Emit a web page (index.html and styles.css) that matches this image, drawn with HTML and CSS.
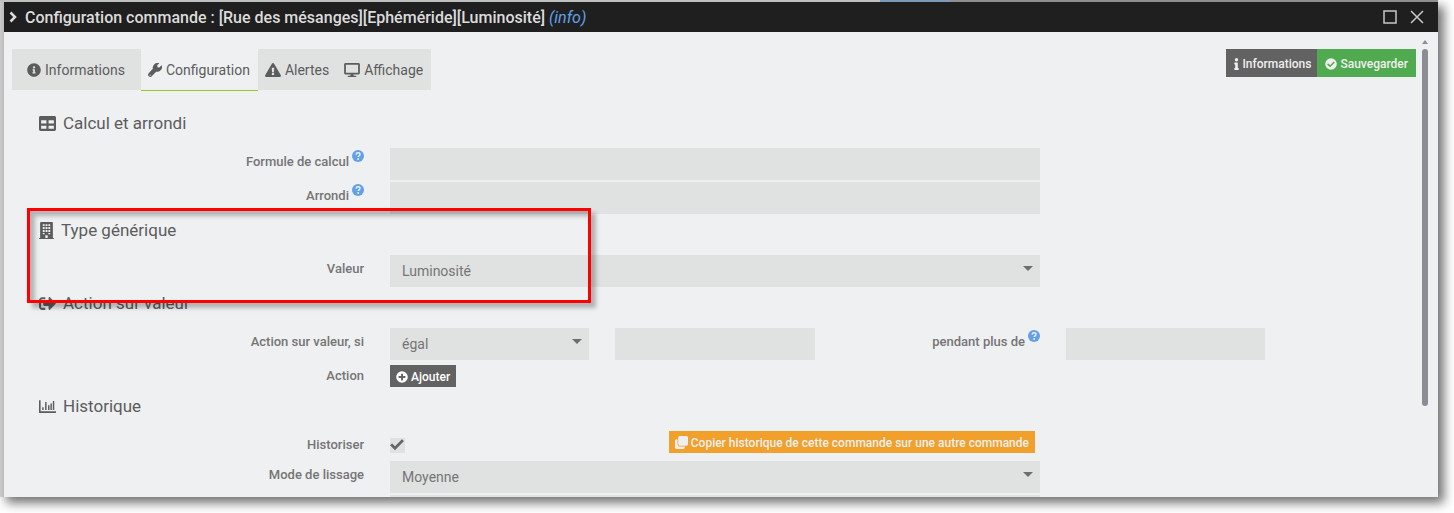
FILE: index.html
```html
<!DOCTYPE html>
<html lang="fr">
<head>
<meta charset="utf-8">
<title>Configuration commande</title>
<link rel="stylesheet" href="styles.css">
</head>
<body>
<svg class="defs" aria-hidden="true">
  <symbol id="i-info-circle" viewBox="0 0 512 512"><path d="M256 8C119 8 8 119 8 256s111 248 248 248 248-111 248-248S393 8 256 8zm0 110a42 42 0 1 1 0 84 42 42 0 0 1 0-84zm56 254c0 7-5 12-12 12h-88c-7 0-12-5-12-12v-24c0-7 5-12 12-12h12v-64h-12c-7 0-12-5-12-12v-24c0-7 5-12 12-12h64c7 0 12 5 12 12v100h12c7 0 12 5 12 12z"/></symbol>
  <symbol id="i-wrench" viewBox="0 0 512 512"><path d="M508.27 94.98c-2.06-8.33-12.47-11.03-18.54-4.96l-74.36 74.36-67.88-11.31-11.31-67.88 74.36-74.36c6.1-6.1 3.34-16.5-5.05-18.58C354.31-20.57 279.31-.78 226.34 52.19c-44.93 44.93-60 105-50 160L18.750 385c-25 25-25 62 0 87l22 22c25 25 62 25 87 0l168-172c60.500 7.400 122.500-14.300 165-56.800 52.900-52.900 66-108 48.100-170.200zM80 464a24 24 0 1 1 0-48 24 24 0 0 1 0 48z"/></symbol>
  <symbol id="i-warning" viewBox="0 0 576 512"><path d="M569.5 440C588 472 564.800 512 527.900 512H48.100c-36.900 0-60-40.100-41.600-72L246.400 24c18.500-32 64.700-32 83.200 0zM288 354a46 46 0 1 0 0 92 46 46 0 0 0 0-92zm-43.700-165.300 7.400 136c.4 6.400 5.700 11.300 12 11.300h48.500c6.400 0 11.600-5 12-11.300l7.400-136c.4-6.900-5.100-12.700-12-12.700h-63.400c-6.900 0-12.300 5.800-11.900 12.700z"/></symbol>
  <symbol id="i-desktop" viewBox="0 0 576 512"><path d="M528 0H48C21.500 0 0 21.500 0 48v320c0 26.500 21.500 48 48 48h192l-16 48h-72c-13.300 0-24 10.700-24 24s10.700 24 24 24h272c13.300 0 24-10.700 24-24s-10.700-24-24-24h-72l-16-48h192c26.500 0 48-21.500 48-48V48c0-26.500-21.500-48-48-48zm-16 352H64V64h448z"/></symbol>
  <symbol id="i-table" viewBox="0 0 512 512"><path d="M464 32H48C21.500 32 0 53.500 0 80v352c0 26.500 21.500 48 48 48h416c26.500 0 48-21.500 48-48V80c0-26.500-21.500-48-48-48zM224 416H64v-96h160zm0-160H64v-96h160zm224 160H288v-96h160zm0-160H288v-96h160z"/></symbol>
  <symbol id="i-building" viewBox="0 0 448 512"><path fill-rule="evenodd" d="M436 480h-20V24c0-13-11-24-24-24H56C43 0 32 11 32 24v456H12c-7 0-12 5-12 12v20h448v-20c0-7-5-12-12-12zM112 64h56v60h-56zm84 0h56v60h-56zm84 0h56v60h-56zM112 152h56v60h-56zm84 0h56v60h-56zm84 0h56v60h-56zM112 240h56v60h-56zm84 0h56v60h-56zm84 0h56v60h-56zM112 328h56v40h-56zm168 0h56v40h-56zM188 400h72v80h-72z"/></symbol>
  <symbol id="i-signout" viewBox="0 0 512 512"><path d="M497 273 329 441c-15 15-41 4.500-41-17v-96H152c-13.300 0-24-10.700-24-24v-96c0-13.300 10.700-24 24-24h136V88c0-21.400 25.900-32 41-17l168 168c9.300 9.400 9.300 24.600 0 34zM192 436v-40c0-6.600-5.400-12-12-12H96c-17.700 0-32-14.300-32-32V160c0-17.700 14.300-32 32-32h84c6.600 0 12-5.400 12-12V76c0-6.600-5.400-12-12-12H96c-53 0-96 43-96 96v192c0 53 43 96 96 96h84c6.600 0 12-5.400 12-12z"/></symbol>
  <symbol id="i-chart" viewBox="0 0 512 512"><path d="M0 72c0-4 4-8 8-8h32c4 0 8 4 8 8v328h456c4 0 8 4 8 8v32c0 4-4 8-8 8H16c-9 0-16-7-16-16zM96 280h44v80H96zM184 120h44v240h-44zM272 216h44v144h-44zM344 168h44v192h-44zM416 88h44v272h-44z"/></symbol>
  <symbol id="i-question" viewBox="0 0 512 512"><circle cx="256" cy="256" r="256"/><path d="M170 195c8-54 40-78 88-78 48 0 84 30 84 74 0 59-78 59-78 112" fill="none" stroke="#eff0f2" stroke-width="60"/><circle cx="263" cy="380" r="42" fill="#eff0f2"/></symbol>
  <symbol id="i-check-circle" viewBox="0 0 512 512"><path d="M504 256a248 248 0 1 1-496 0 248 248 0 0 1 496 0zM227.300 387.300l184-184c6.200-6.200 6.200-16.400 0-22.600l-22.600-22.600c-6.200-6.200-16.400-6.200-22.600 0L216 308.100l-70.100-70.100c-6.200-6.200-16.400-6.200-22.600 0l-22.600 22.600c-6.200 6.200-6.200 16.400 0 22.600l104 104c6.200 6.300 16.400 6.300 22.600.1z"/></symbol>
  <symbol id="i-plus-circle" viewBox="0 0 512 512"><path d="M256 8a248 248 0 1 0 0 496 248 248 0 0 0 0-496zm144 276c0 7-5 12-12 12h-92v92c0 7-5 12-12 12h-56c-7 0-12-5-12-12v-92h-92c-7 0-12-5-12-12v-56c0-7 5-12 12-12h92v-92c0-7 5-12 12-12h56c7 0 12 5 12 12v92h92c7 0 12 5 12 12z"/></symbol>
  <symbol id="i-info" viewBox="0 0 192 512"><path d="M20 424h20V280H20c-11 0-20-9-20-20v-48c0-11 9-20 20-20h112c11 0 20 9 20 20v212h20c11 0 20 9 20 20v48c0 11-9 20-20 20H20c-11 0-20-9-20-20v-48c0-11 9-20 20-20zM96 0a72 72 0 1 1 0 144A72 72 0 0 1 96 0z"/></symbol>
  <symbol id="i-clone" viewBox="0 0 512 512"><path d="M456 0c30 0 56 26 56 56v272c0 30-26 56-56 56H184c-30 0-56-26-56-56V56c0-30 26-56 56-56zM184 412c-50 0-84-34-84-84V128H56c-30 0-56 26-56 56v272c0 30 26 56 56 56h272c30 0 56-26 56-56v-44z"/></symbol>
</svg>

<div class="screen">
  <section class="dialog" aria-labelledby="dialog-title">
    <header class="titlebar">
      <svg class="chevron" viewBox="0 0 8 12"><path d="M1.500 1.500 6 6l-4.500 4.500"/></svg>
      <h1 class="title" id="dialog-title">Configuration commande : [Rue des mésanges][Ephéméride][Luminosité] <em class="kind">(info)</em></h1>
      <button class="winbtn" type="button" aria-label="Agrandir"><svg viewBox="0 0 14 14"><path d="M1 1h12v12H1z"/></svg></button>
      <button class="winbtn" type="button" aria-label="Fermer"><svg viewBox="0 0 14 14"><path d="m1 1 12 12M13 1 1 13"/></svg></button>
    </header>

    <div class="body">
      <main class="content">
        <div class="toolbar">
          <nav class="tabs">
            <a class="tab tab-first" href="#informations"><svg class="icon"><use href="#i-info-circle"/></svg>Informations</a>
            <a class="tab active" href="#configuration"><svg class="icon"><use href="#i-wrench"/></svg>Configuration</a>
            <a class="tab" href="#alertes"><svg class="icon wide"><use href="#i-warning"/></svg>Alertes</a>
            <a class="tab" href="#affichage"><svg class="icon wide"><use href="#i-desktop"/></svg>Affichage</a>
          </nav>
          <div class="actions">
            <button class="btn btn-tall" type="button"><svg class="icon slim"><use href="#i-info"/></svg>Informations</button>
            <button class="btn btn-tall btn-success" type="button"><svg class="icon"><use href="#i-check-circle"/></svg>Sauvegarder</button>
          </div>
        </div>

        <form class="form">
          <h2 class="legend"><svg class="icon"><use href="#i-table"/></svg>Calcul et arrondi</h2>
          <div class="row">
            <label class="label" for="formula">Formule de calcul<svg class="help"><use href="#i-question"/></svg></label>
            <div class="cell span6"><input class="field" id="formula" type="text"></div>
          </div>
          <div class="row">
            <label class="label" for="round">Arrondi<svg class="help"><use href="#i-question"/></svg></label>
            <div class="cell span6"><input class="field" id="round" type="text"></div>
          </div>

          <h2 class="legend"><svg class="icon narrow"><use href="#i-building"/></svg>Type générique</h2>
          <div class="row">
            <label class="label" for="generic">Valeur</label>
            <div class="cell span6 select"><select class="field" id="generic"><option>Luminosité</option></select></div>
          </div>

          <h2 class="legend"><svg class="icon"><use href="#i-signout"/></svg>Action sur valeur</h2>
          <div class="row">
            <label class="label" for="operator">Action sur valeur, si</label>
            <div class="cell span2 select"><select class="field" id="operator"><option>égal</option></select></div>
            <div class="cell span2"><input class="field" type="text" aria-label="Valeur comparée"></div>
            <label class="label span2" for="during">pendant plus de<svg class="help"><use href="#i-question"/></svg></label>
            <div class="cell span2"><input class="field" id="during" type="text"></div>
          </div>
          <div class="row">
            <span class="label">Action</span>
            <div class="cell span6 pushed"><button class="btn" type="button"><svg class="icon"><use href="#i-plus-circle"/></svg>Ajouter</button></div>
          </div>

          <h2 class="legend"><svg class="icon"><use href="#i-chart"/></svg>Historique</h2>
          <div class="row">
            <label class="label" for="history">Historiser</label>
            <div class="cell span6 split">
              <input class="check" id="history" type="checkbox" checked>
              <button class="btn btn-warning" type="button"><svg class="icon"><use href="#i-clone"/></svg>Copier historique de cette commande sur une autre commande</button>
            </div>
          </div>
          <div class="row">
            <label class="label" for="smooth">Mode de lissage</label>
            <div class="cell span6 select"><select class="field" id="smooth"><option>Moyenne</option></select></div>
          </div>
          <div class="row">
            <span class="label"><svg class="help"><use href="#i-question"/></svg></span>
            <div class="cell span6"><input class="field" type="text" aria-label="Purge"></div>
          </div>
        </form>
      </main>
      <div class="scrollbar"><i class="up"></i><i class="thumb"></i></div>
    </div>
  </section>
  <div class="highlight"></div>
</div>
</body>
</html>
```
FILE: styles.css
```css
* { box-sizing: border-box; }

body {
  margin: 0;
  height: 100vh;
  padding: 0 16px 16px 0;
  overflow: hidden;
  background: #fff;
  color: #5c5c5c;
  font: 14px/20px Roboto, "Liberation Sans", sans-serif;
}

.defs { display: none; }

.screen {
  position: relative;
  display: flex;
  height: 100%;
  padding: 2px 0 0 4px;
  background:
    linear-gradient(90deg, #bfc1c1 880px, #7d9ab8 880px, #7d9ab8 950px, #8f8f8f 950px) top / 100% 2px no-repeat,
    linear-gradient(90deg, #cbcbcb, #bcbcbc) left / 4px 100% no-repeat;
  box-shadow: 6px 6px 10px rgba(0, 0, 0, .55);
  clip-path: inset(0 -16px -16px 0);
}

.dialog {
  flex: 1;
  display: flex;
  flex-direction: column;
  min-width: 0;
  overflow: hidden;
  background: #eff0f2;
}

.titlebar {
  display: flex;
  flex: none;
  align-items: center;
  gap: 13px;
  height: 30px;
  padding: 0 14px 0 5px;
  background: #1f1f1f;
  color: #dcdcdc;
}

.chevron {
  width: 8px;
  height: 12px;
  margin-right: -5px;
  fill: none;
  stroke: #dcdcdc;
  stroke-width: 2.500;
}

.title {
  flex: 1;
  margin: 0;
  padding-top: 2px;
  font-size: 16px;
  font-weight: 500;
  line-height: 28px;
}

.kind { color: #62a0ea; font-weight: 400; }

.winbtn {
  width: 14px;
  height: 14px;
  padding: 0;
  border: 0;
  background: none;
}

.winbtn svg {
  display: block;
  fill: none;
  stroke: #c8c8c8;
  stroke-width: 1.500;
}

.body { flex: 1; display: flex; min-height: 0; }

.content { flex: 1; min-width: 0; padding: 17px 0 0 8px; }

.toolbar {
  display: flex;
  justify-content: space-between;
  align-items: flex-start;
  height: 60px;
}

.tabs { display: flex; background: #e0e2e1; }

.tab {
  display: flex;
  align-items: center;
  gap: 4px;
  height: 41px;
  padding: 0 8px 0 7px;
  color: #5c5c5c;
  text-decoration: none;
}

.tab-first { padding: 0 16px 0 15px; }

.tab.active {
  height: 42px;
  margin-bottom: -1px;
  border-bottom: 1px solid #96cb1e;
  background: #eff0f2;
}

.icon { flex: none; width: 14px; height: 14px; fill: currentColor; }
.icon.wide { width: 16px; }

.actions { display: flex; }

.btn {
  display: flex;
  align-items: center;
  gap: 3px;
  height: 22px;
  padding: 1px 6px 0;
  border: 0;
  background: #626262;
  color: #fff;
  font: 500 12px/20px Roboto, "Liberation Sans", sans-serif;
}

.btn .icon { width: 12px; height: 12px; }
.btn .icon.slim { width: 5px; }
.btn-tall { height: 28px; padding: 1px 6px 0 8px; color: #efefef; }
.btn-success { padding-right: 8px; background: #50aa50; }
.btn-warning { background: #f0a02b; color: #efefef; }
.btn-warning .icon { width: 13px; height: 13px; }

.form { padding: 0 25px 0 27px; }

.legend {
  display: flex;
  align-items: center;
  gap: 7px;
  height: 28px;
  margin: 0 0 11px;
  font-size: 17px;
  font-weight: 400;
}

.legend .icon { width: 17px; height: 17px; }
.legend .icon.narrow { width: 15px; }

.row {
  display: grid;
  grid-template-columns: repeat(12, 1fr);
  min-height: 28px;
  margin-bottom: 2px;
}

.label {
  grid-column: span 3;
  display: flex;
  justify-content: flex-end;
  gap: 3px;
  padding: 4px 13px 0;
  color: #757575;
  font-size: 13px;
  font-weight: 500;
}

.help { flex: none; width: 12px; height: 12px; margin-top: -2px; fill: #62a0ea; }

.cell { padding: 0 13px; min-width: 0; }
.span2 { grid-column: span 2; }
.span6 { grid-column: span 6; }
.pushed { padding-top: 3px; }

.field {
  display: block;
  width: 100%;
  height: 32px;
  padding: 0 12px;
  border: 0;
  border-radius: 0;
  outline: 0;
  appearance: none;
  background: #e0e2e1;
  color: #757575;
  font: 14px/20px Roboto, "Liberation Sans", sans-serif;
}

.select { position: relative; }

.select::after {
  content: "";
  position: absolute;
  top: 11px;
  right: 20px;
  border: 5px solid transparent;
  border-top-color: #6e6e6e;
  border-bottom: 0;
}

.split {
  display: flex;
  justify-content: space-between;
  align-items: flex-start;
  padding-right: 18px;
}

.check {
  width: 15px;
  height: 15px;
  margin: 7px 0 0;
  appearance: none;
  background: #e0e2e1;
}

.check::before {
  content: "";
  display: block;
  width: 14px;
  height: 12px;
  margin-top: 1px;
  background: #666;
  clip-path: polygon(0 52%, 15% 37%, 36% 60%, 85% 2%, 100% 17%, 36% 94%);
}

.scrollbar {
  flex: none;
  display: flex;
  flex-direction: column;
  align-items: center;
  gap: 5px;
  width: 22px;
  padding: 8px 4px 91px 0;
}

.up {
  border: 3px solid transparent;
  border-bottom: 4px solid #8c8c94;
  border-top: 0;
}

.thumb { flex: 1; width: 6px; border-radius: 3px; background: #8c8c94; }

/* Callout frame laid over the form */
.highlight {
  position: absolute;
  top: 208px;
  left: 27px;
  width: 564px;
  height: 95px;
  border: 3px solid #f00;
  box-shadow: 5px 5px 4px rgba(0, 0, 0, .25), inset 5px 5px 4px rgba(0, 0, 0, .25);
}
```
